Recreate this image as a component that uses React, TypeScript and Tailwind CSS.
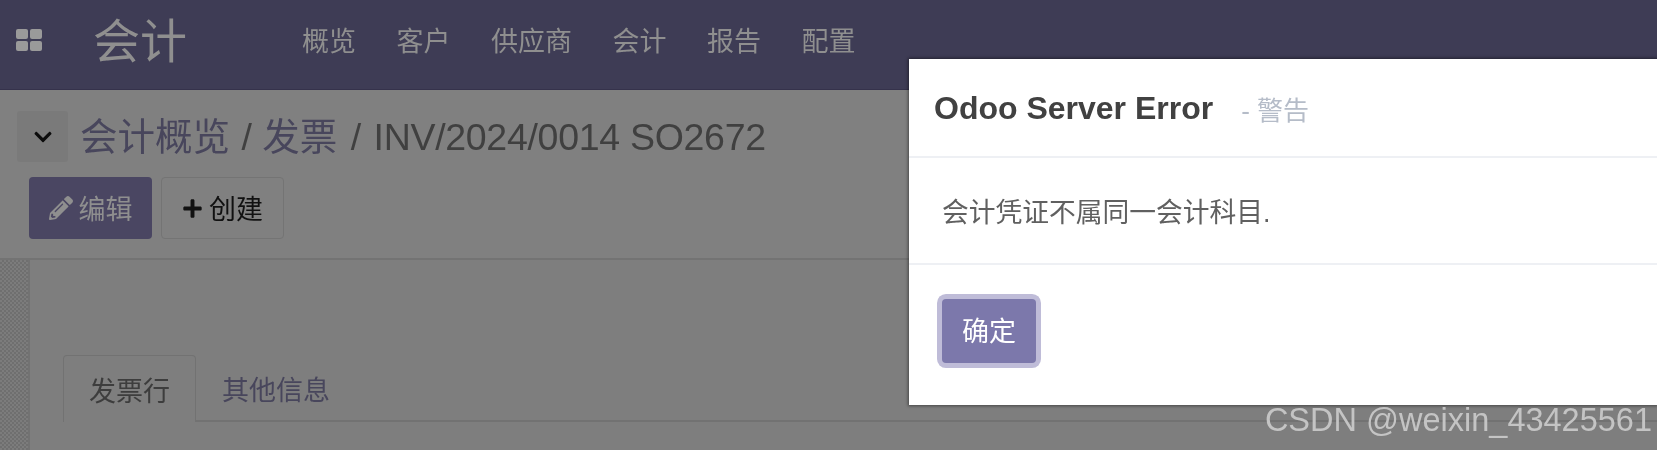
import React from 'react';
import { FaChevronDown, FaPencilAlt, FaPlus } from 'react-icons/fa';

const menuItems = ['概览', '客户', '供应商', '会计', '报告', '配置'];

const AppsIcon = () => (
  <svg width="26" height="22" viewBox="0 0 26 22" fill="#9a9a9a">
    <rect x="0" y="0" width="12" height="10" rx="2" />
    <rect x="14" y="0" width="12" height="10" rx="2" />
    <rect x="0" y="12" width="12" height="10" rx="2" />
    <rect x="14" y="12" width="12" height="10" rx="2" />
  </svg>
);

const NavBar = () => (
  <div className="flex h-[90px] shrink-0 items-center bg-[#3e3c55] border-b border-[#35324b]">
    <div className="ml-4 -mt-[9px]">
      <AppsIcon />
    </div>
    <div className="ml-[51px] w-[209px] -mt-[6px] text-[47px] leading-none text-[#8f8f8f]">会计</div>
    <div className="flex gap-[40.5px] -mt-[4px] text-[27px] leading-none text-[#8f8f8f]">
      {menuItems.map((item, i) => (
        <span key={i}>{item}</span>
      ))}
    </div>
  </div>
);

const ControlPanel = () => (
  <div className="h-[170px] shrink-0 border-b-2 border-[#737373] bg-[#808080]">
    <div className="flex items-center pl-[17px] pt-[21px]">
      <div className="flex h-[51px] w-[51px] items-center justify-center rounded-[3px] bg-[#7a7a7a] text-[#0c0c0c]">
        <FaChevronDown size={20} />
      </div>
      <div className="ml-3 pt-[3px] whitespace-nowrap text-[37.5px] leading-none text-[#404040]">
        <span className="text-[#48465c]">会计概览</span>
        <span className="ml-px"> / </span>
        <span className="text-[#48465c]">发票</span>
        <span className="ml-[3px]"> / </span>
        <span className="ml-[2px] tracking-[-0.3px]">INV/2024/0014 SO2672</span>
      </div>
    </div>
    <div className="mt-[15px] flex gap-[9px] pl-[29px]">
      <button className="flex h-[62px] w-[123px] items-center justify-center gap-[6px] rounded-[4px] bg-[#4a4662] text-[27px] text-[#8f8f8f]">
        <FaPencilAlt size={24} />
        <span className="pt-[5px]">编辑</span>
      </button>
      <button className="flex h-[62px] w-[123px] items-center justify-center gap-[6px] rounded-[4px] border border-[#747474] bg-[#808080] text-[27px] text-[#111111]">
        <FaPlus size={21} />
        <span className="pt-[5px]">创建</span>
      </button>
    </div>
  </div>
);

const Sheet = () => (
  <div className="flex min-h-0 flex-1 bg-[#7e7e7e]">
    <div className="w-[30px] shrink-0 border-r-2 border-[#727272] bg-[repeating-conic-gradient(#6f6f6f_0_25%,#7c7c7c_0_50%)] bg-[length:4px_4px]" />
    <div className="flex-1 pl-[33px] pt-[95px]">
      <div className="flex h-[67px] border-b-2 border-[#727272]">
        <div className="-mb-[2px] flex h-[67px] w-[133px] items-center justify-center rounded-t-[4px] border border-b-0 border-[#727272] bg-[#7e7e7e] pt-[7px] text-[27px] text-[#3d3d3d]">
          发票行
        </div>
        <div className="ml-[26px] flex items-center pt-[7px] text-[27px] text-[#48465c]">其他信息</div>
      </div>
    </div>
  </div>
);

const ErrorModal = () => (
  <div className="absolute left-[909px] right-0 top-[59px] flex h-[346px] flex-col bg-white shadow-[0_0_3px_1px_rgba(0,0,0,0.45)]">
    <div className="flex h-[99px] shrink-0 items-center border-b-2 border-[#eef0f4] pl-[25px]">
      <span className="pt-[1px] text-[32px] font-bold leading-none text-[#414141]">Odoo Server Error</span>
      <span className="ml-[28px] pt-[6px] text-[26px] leading-none text-[#b5bcc8]">- 警告</span>
    </div>
    <div className="flex h-[107px] shrink-0 items-center border-b-2 border-[#eef0f4] pl-[33px] pt-[5px] text-[26.75px] text-[#606060]">
      会计凭证不属同一会计科目.
    </div>
    <div className="pl-[33px] pt-[34px]">
      <button className="flex h-[64px] w-[94px] items-center justify-center rounded-[4px] bg-[#7c78ab] pt-[2px] text-[27px] text-white shadow-[0_0_0_5px_#bfbcd8]">
        确定
      </button>
    </div>
  </div>
);

export default function App() {
  return (
    <div className="relative flex h-[450px] w-full flex-col overflow-hidden bg-[#808080] font-['Liberation_Sans','Noto_Sans_CJK_SC',sans-serif] blur-[0.4px]">
      <NavBar />
      <ControlPanel />
      <Sheet />
      <ErrorModal />
      <div className="absolute bottom-[14px] right-[5px] whitespace-nowrap text-[32.5px] leading-none text-[#c4c4c4]">
        CSDN @weixin_43425561
      </div>
    </div>
  );
}
